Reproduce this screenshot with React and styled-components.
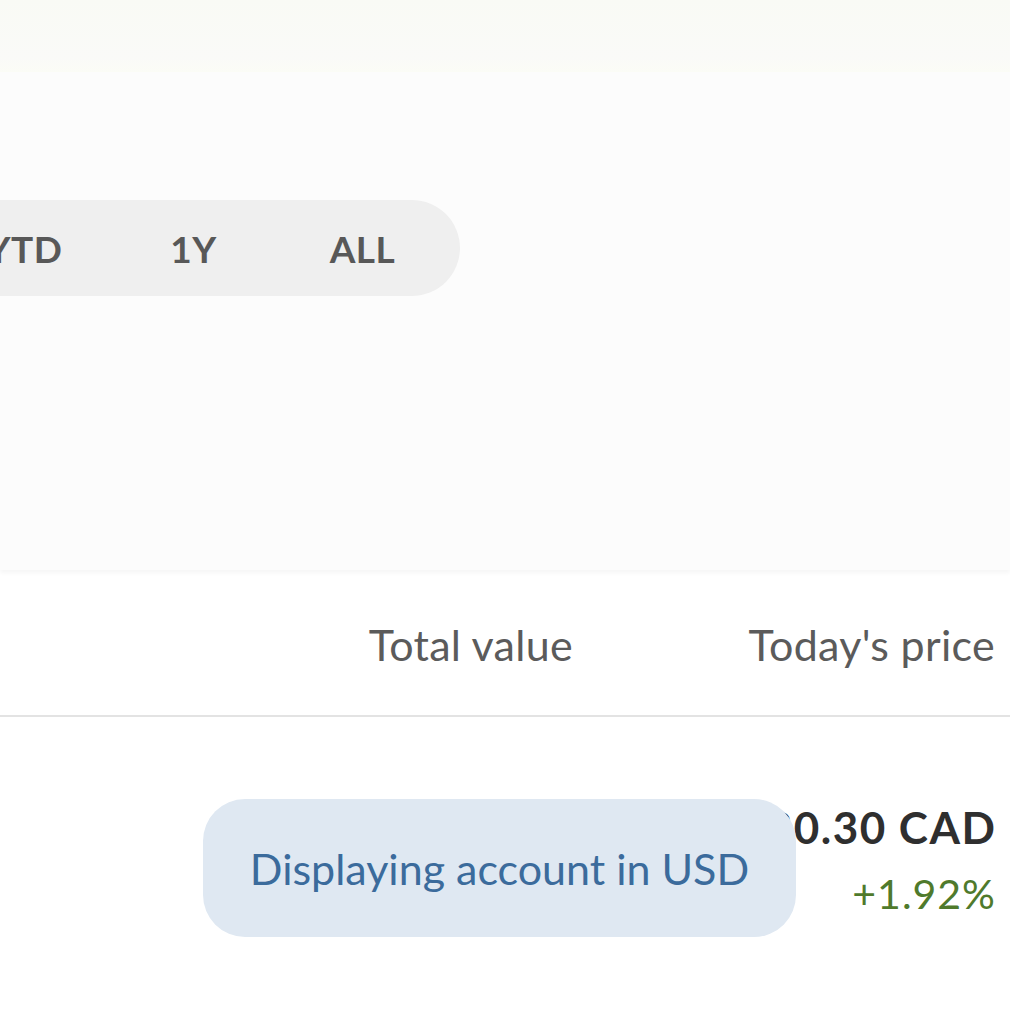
import React from 'react'
import styled, { createGlobalStyle } from 'styled-components'

const ranges = ['1W', '1M', '3M', 'YTD', '1Y', 'ALL']

const App = () => {
    return (
        <Page>
            <GlobalStyle />
            <TopBar />
            <ChartArea>
                <RangeTabs>
                    {ranges.map((r) => (
                        <RangeTab key={r}>{r}</RangeTab>
                    ))}
                </RangeTabs>
            </ChartArea>

            <Table>
                <HeaderRow>
                    <span />
                    <HeadCell>Total value</HeadCell>
                    <HeadCell>Today's price</HeadCell>
                </HeaderRow>
                <Row>
                    <span />
                    <span />
                    <Cell>
                        <Value>$130.30 CAD</Value>
                        <Change>+1.92%</Change>
                    </Cell>
                </Row>
            </Table>

            <Toast>Displaying account in USD</Toast>
        </Page>
    )
}

export default App

const GlobalStyle = createGlobalStyle`
    html, body {
        margin: 0;
        padding: 0;
        background: #ffffff;
        overflow: hidden;
    }
    body {
        font-family: Lato, "Noto Sans", sans-serif;
    }
`

const Page = styled.div`
    position: relative;
    width: 1010px;
    height: 1010px;
    overflow: hidden;
    background: #ffffff;
    display: flex;
    flex-direction: column;
`

const TopBar = styled.div`
    height: 72px;
    flex-shrink: 0;
    background: linear-gradient(180deg, #f9faf5 0%, #fafaf8 80%, #fbfcf6 100%);
`

const ChartArea = styled.div`
    height: 498px;
    flex-shrink: 0;
    background: #fcfcfc;
    box-shadow: 0 3px 4px rgba(0, 0, 0, 0.04);
    position: relative;
    z-index: 1;
    padding-top: 128px;
    box-sizing: border-box;
`

const RangeTabs = styled.div`
    display: flex;
    align-items: center;
    width: max-content;
    height: 96px;
    margin-left: -580px;
    padding: 0 13px;
    border-radius: 48px;
    background: #efefef;
`

const RangeTab = styled.div`
    width: 169px;
    text-align: center;
    font-size: 37px;
    font-weight: 700;
    color: #585858;
    letter-spacing: 0.5px;
`

const Table = styled.div`
    display: flex;
    flex-direction: column;
    padding-right: 15px;
`

const HeaderRow = styled.div`
    display: grid;
    grid-template-columns: 1fr 300px 422px;
    align-items: center;
    height: 145px;
    border-bottom: 2px solid #e3e3e3;
    margin-right: -15px;
    padding-right: 15px;
`

const HeadCell = styled.div`
    text-align: right;
    font-size: 43px;
    font-weight: 400;
    color: #5b5b5b;
    letter-spacing: 0.3px;
    padding-top: 4px;
`

const Row = styled.div`
    display: grid;
    grid-template-columns: 1fr 300px 422px;
    padding-top: 85px;
`

const Cell = styled.div`
    display: flex;
    flex-direction: column;
    align-items: flex-end;
    gap: 17px;
`

const Value = styled.div`
    font-size: 44px;
    font-weight: 700;
    color: #2f2f2f;
    line-height: 50px;
    letter-spacing: 1.5px;
    margin-right: -1.5px;
`

const Change = styled.div`
    font-size: 41px;
    color: #4f7a2c;
    line-height: 50px;
    letter-spacing: 1px;
    margin-right: -1px;
`

const Toast = styled.div`
    position: absolute;
    left: 203px;
    top: 799px;
    width: 593px;
    height: 138px;
    border-radius: 42px;
    background: #dfe8f2;
    color: #3b6b9c;
    font-size: 43px;
    display: flex;
    align-items: center;
    justify-content: center;
    letter-spacing: 0px;
    z-index: 5;
`
